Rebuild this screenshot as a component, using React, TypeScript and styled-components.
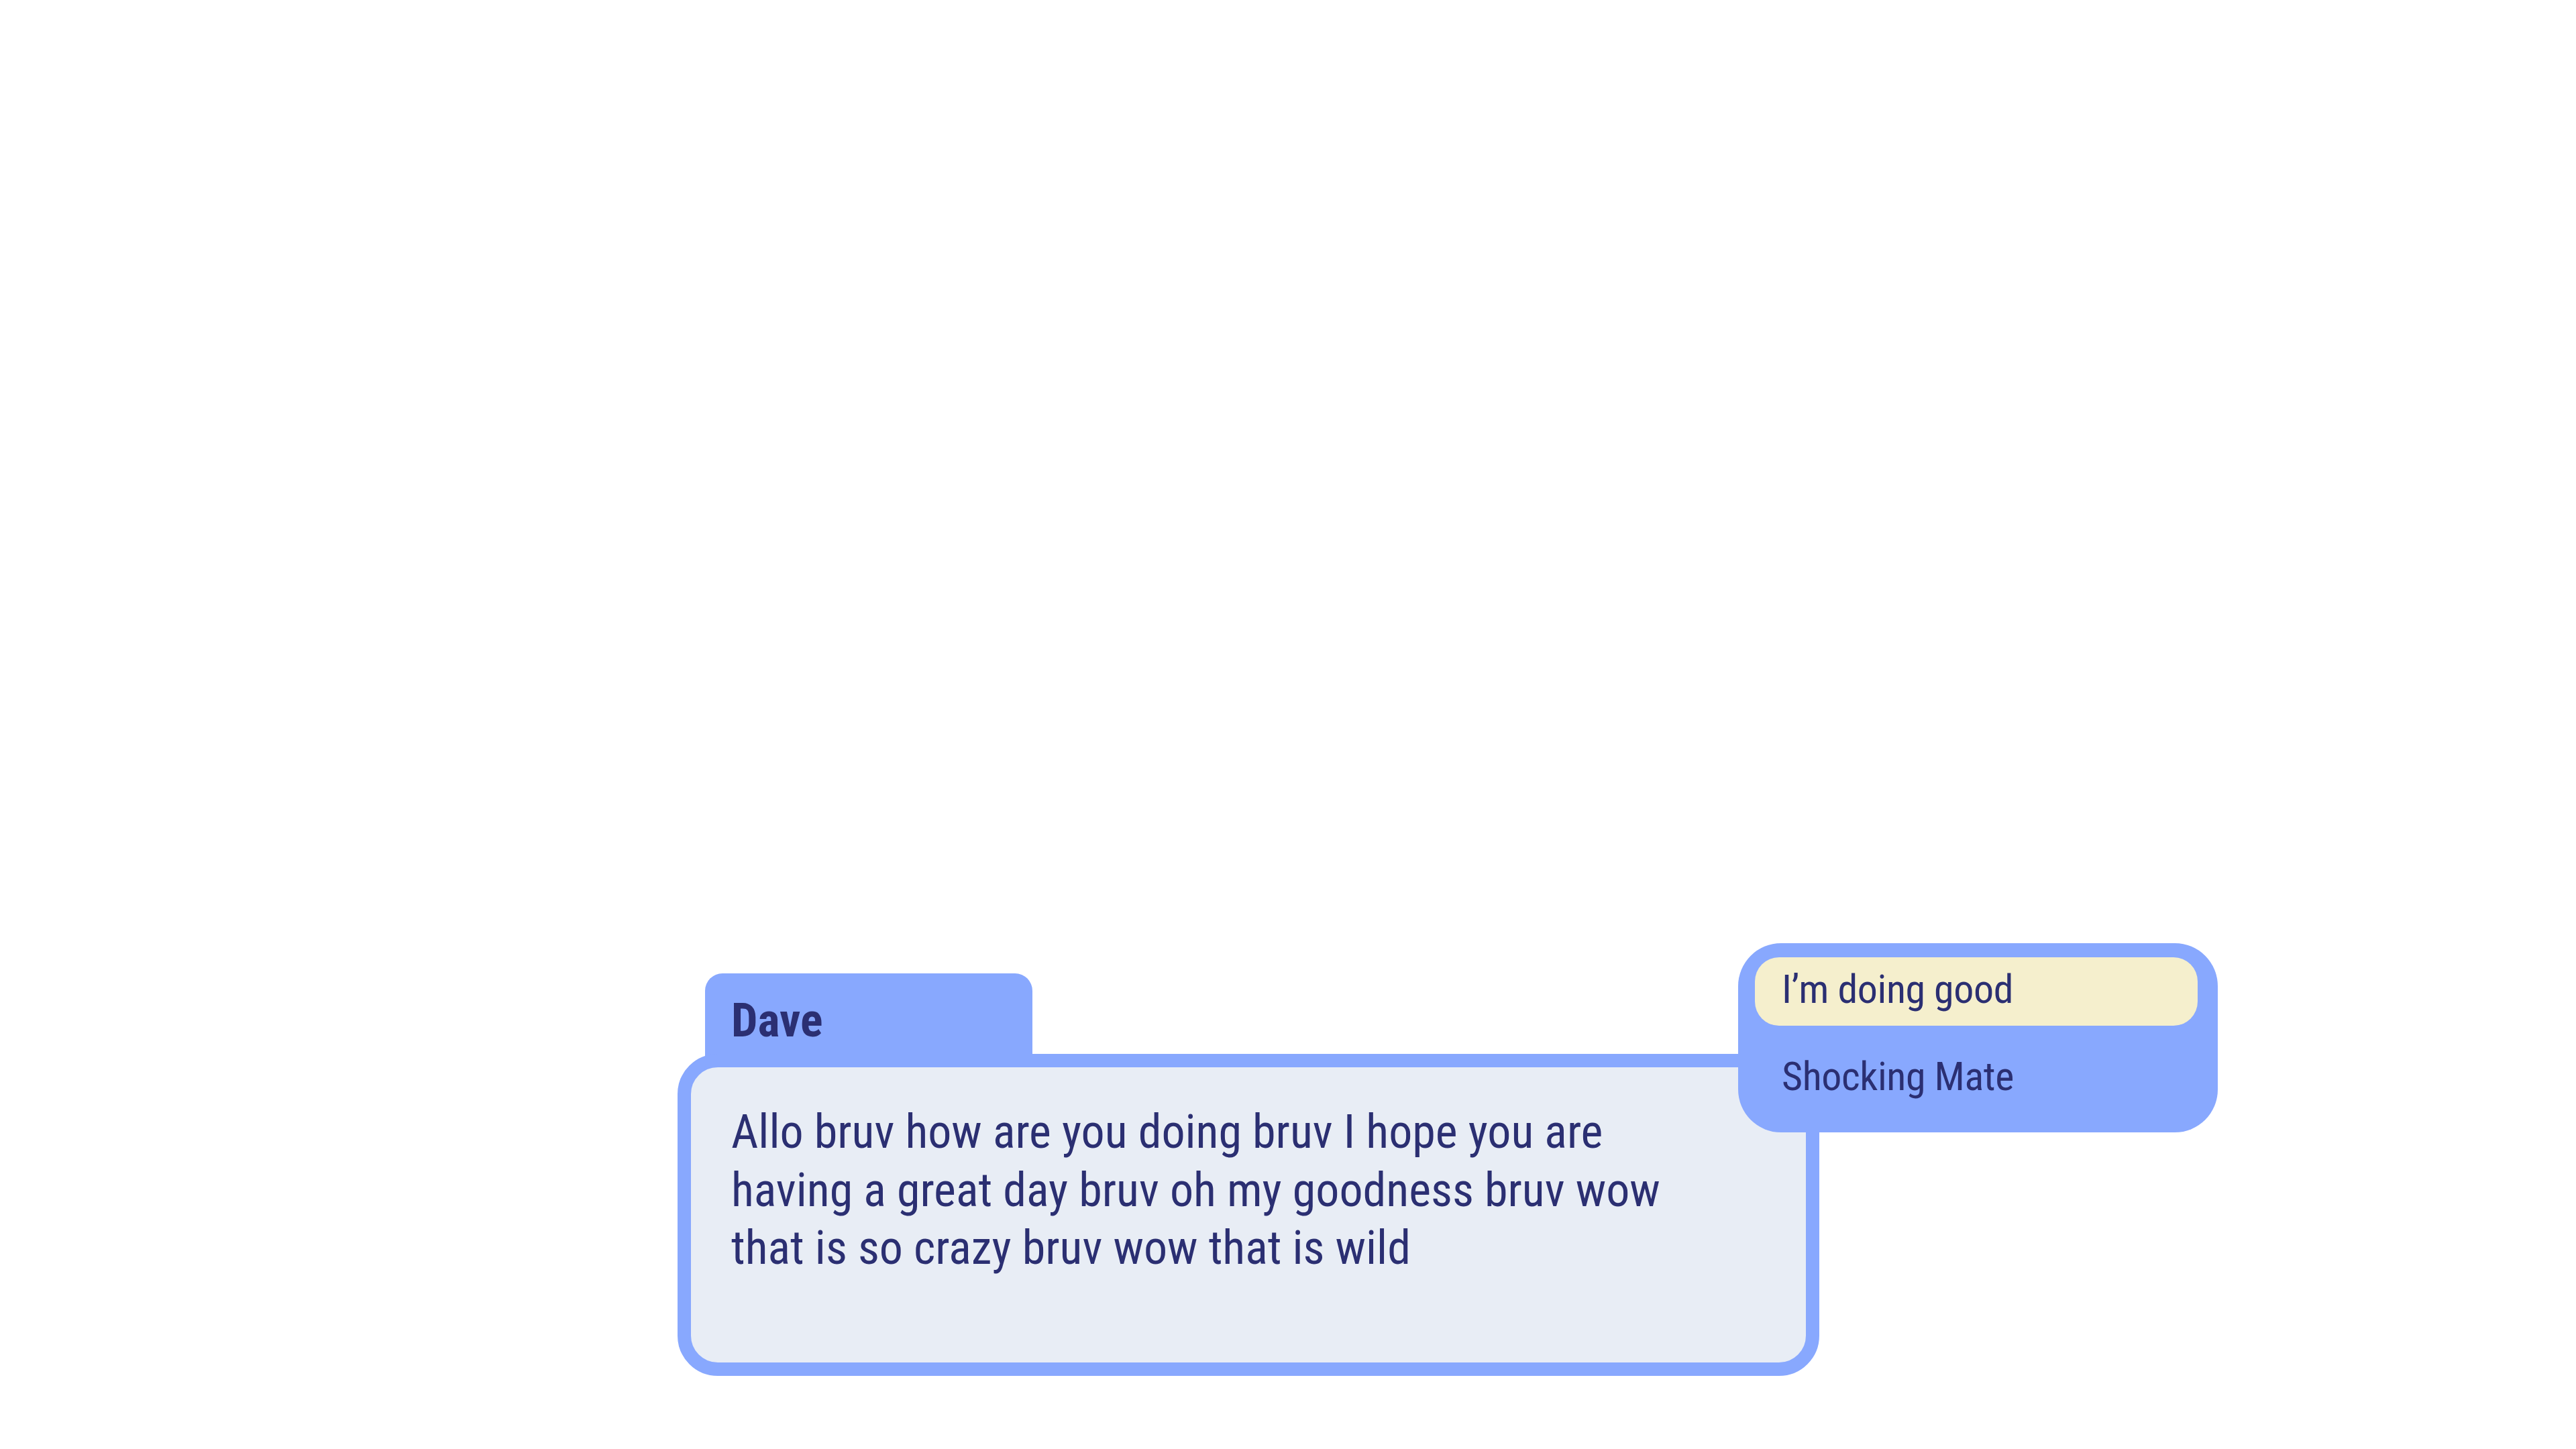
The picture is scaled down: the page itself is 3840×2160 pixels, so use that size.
import React from "react";
import styled, { createGlobalStyle } from "styled-components";

const GlobalStyle = createGlobalStyle`
  html, body { margin: 0; padding: 0; background: #ffffff; }
  body { font-family: "Roboto Condensed", Roboto, "Liberation Sans", sans-serif; }
`;

const Page = styled.div`
  width: 100%;
  height: 100vh;
  display: flex;
  flex-direction: column;
  justify-content: flex-end;
  padding: 0 0 109px 1010px;
  box-sizing: border-box;
`;

const Wrapper = styled.div`
  position: relative;
  width: 1702px;
  display: flex;
  flex-direction: column;
`;

const font = `
  font-family: "Roboto Condensed", Roboto, "Liberation Sans", sans-serif;
  font-stretch: condensed;
  color: #2b2f72;
`;

const NameTab = styled.div`
  ${font}
  margin-left: 41px;
  width: 488px;
  height: 140px;
  margin-bottom: -20px;
  box-sizing: border-box;
  padding: 27px 0 0 39px;
  background: #88a8fe;
  border-radius: 26px 26px 0 0;
  font-size: 70px;
  font-weight: 700;
  line-height: 86px;
`;

const Box = styled.div`
  ${font}
  height: 480px;
  box-sizing: border-box;
  border: 20px solid #88a8fe;
  border-radius: 60px;
  background: #e8edf5;
  padding: 53px 162px 0 60px;
  font-size: 70px;
  font-weight: 400;
  line-height: 86.5px;
`;

const Choices = styled.div`
  position: absolute;
  top: -45px;
  right: -594px;
  width: 715px;
  height: 282px;
  box-sizing: border-box;
  padding: 21px 30px 29px 25px;
  background: #88a8fe;
  border-radius: 64px;
  display: flex;
  flex-direction: column;
  gap: 28px;
`;

const Choice = styled.div<{ $active?: boolean }>`
  ${font}
  height: 102px;
  box-sizing: border-box;
  padding: 12px 0 0 40px;
  border-radius: 36px;
  background: ${(p) => (p.$active ? "#f5efcd" : "transparent")};
  font-size: 60px;
  line-height: 72px;
  letter-spacing: -0.4px;
`;

export default function App() {
  return (
    <>
      <GlobalStyle />
      <Page>
        <Wrapper>
          <NameTab>Dave</NameTab>
          <Box>
            Allo bruv how are you doing bruv I hope you are having a great day bruv oh my goodness bruv wow that is so crazy bruv wow that is wild
          </Box>
          <Choices>
            <Choice $active>I’m doing good</Choice>
            <Choice>Shocking Mate</Choice>
          </Choices>
        </Wrapper>
      </Page>
    </>
  );
}
